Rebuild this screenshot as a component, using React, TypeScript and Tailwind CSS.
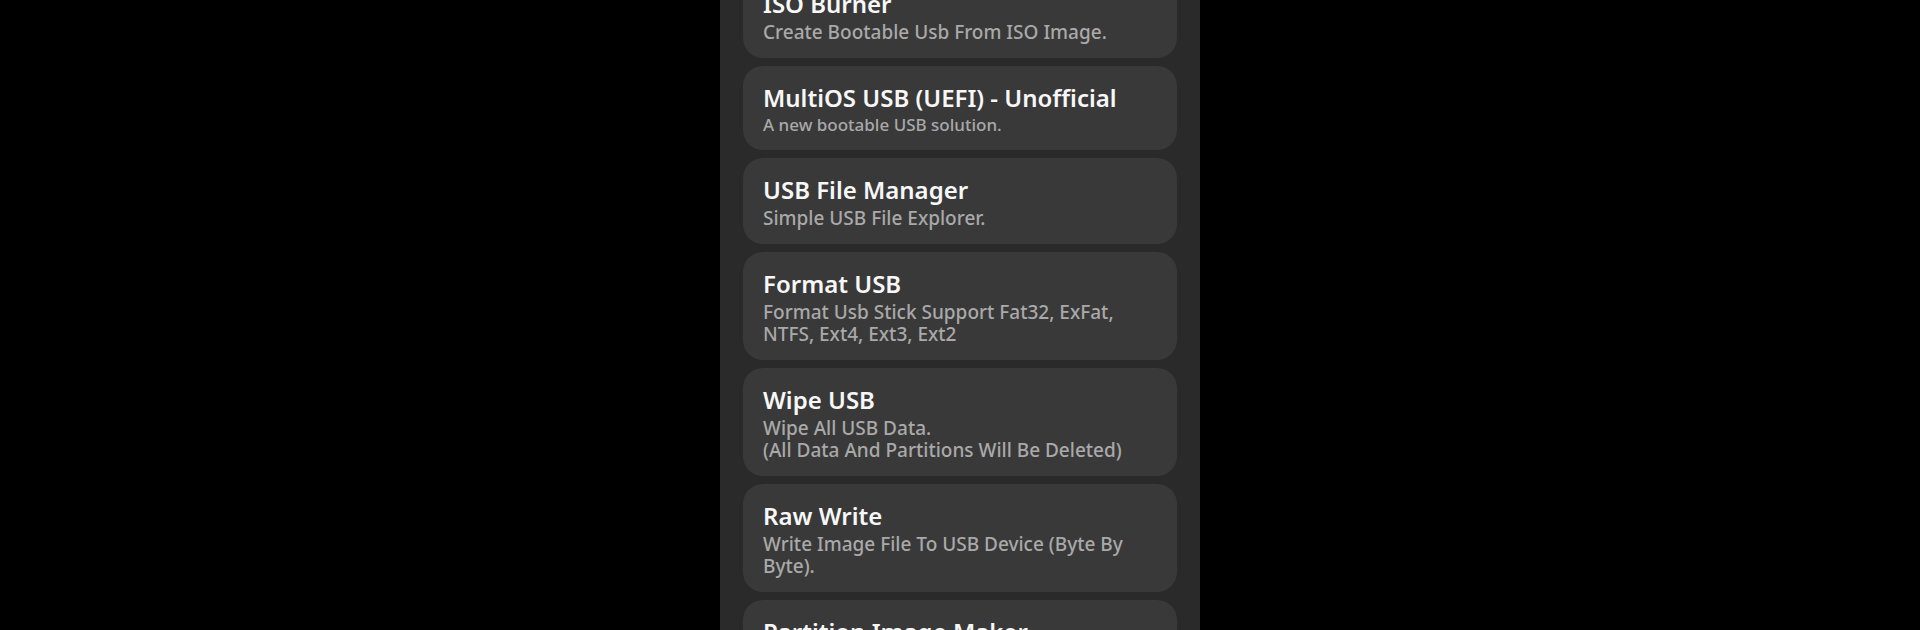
import React from 'react';

type Tool = { title: string; desc: string[]; small?: boolean };

const TOOLS: Tool[] = [
  { title: 'ISO Burner', desc: ['Create Bootable Usb From ISO Image.'] },
  { title: 'MultiOS USB (UEFI) - Unofficial', desc: ['A new bootable USB solution.'], small: true },
  { title: 'USB File Manager', desc: ['Simple USB File Explorer.'] },
  { title: 'Format USB', desc: ['Format Usb Stick Support Fat32, ExFat, NTFS, Ext4, Ext3, Ext2'] },
  { title: 'Wipe USB', desc: ['Wipe All USB Data.', '(All Data And Partitions Will Be Deleted)'] },
  { title: 'Raw Write', desc: ['Write Image File To USB Device (Byte By Byte).'] },
  { title: 'Partition Image Maker', desc: ['Create Image File From USB Partition.'] },
];

const ToolCard: React.FC<{ tool: Tool }> = ({ tool }) => (
  <div className="bg-[#393939] rounded-[20px] px-5 pt-[15px] pb-[15px] shrink-0 cursor-pointer">
    <h3 className="text-[24px] leading-[34px] font-semibold text-[#f7f7f7]">{tool.title}</h3>
    {tool.desc.map((line, i) => (
      <p
        key={i}
        className={`${tool.small ? 'text-[17px] leading-[20px]' : 'text-[19px] leading-[22px]'} font-medium text-[#a9a9a9]`}
      >
        {line}
      </p>
    ))}
  </div>
);

export default function App() {
  return (
    <div
      className="w-[1920px] h-[630px] bg-black flex justify-center overflow-hidden"
      style={{ fontFamily: '"Noto Sans", "Open Sans", sans-serif' }}
    >
      <div className="w-[480px] h-full bg-[#2a2a2a] overflow-hidden px-[23px]">
        <div className="-mt-[28px] flex flex-col gap-2">
          {TOOLS.map(t => (
            <ToolCard key={t.title} tool={t} />
          ))}
        </div>
      </div>
    </div>
  );
}
